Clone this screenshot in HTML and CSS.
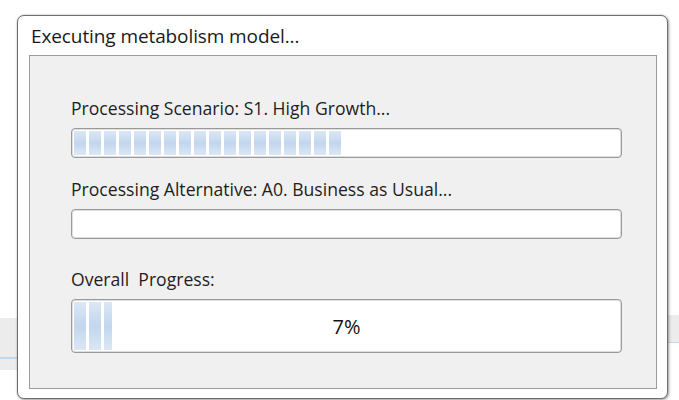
FILE: index.html
```html
<!DOCTYPE html>
<html lang="en">
<head>
<meta charset="utf-8">
<title>Executing metabolism model...</title>
<link rel="stylesheet" href="styles.css">
</head>
<body>
  <div class="dialog">
    <div class="dialog-title">Executing metabolism model...</div>
    <div class="panel">
      <div class="task">
        <div class="task-label">Processing Scenario: S1. High Growth...</div>
        <div class="bar">
          <div class="bar-fill" style="width: 49%"></div>
        </div>
      </div>
      <div class="task">
        <div class="task-label">Processing Alternative: A0. Business as Usual...</div>
        <div class="bar">
          <div class="bar-fill" style="width: 0%"></div>
        </div>
      </div>
      <div class="task task-overall">
        <div class="task-label">Overall&nbsp; Progress:</div>
        <div class="bar bar-large">
          <div class="bar-fill" style="width: 7%"></div>
          <span class="bar-text">7%</span>
        </div>
      </div>
    </div>
  </div>
</body>
</html>
```

FILE: styles.css
```css
html, body {
  margin: 0;
  padding: 0;
}

body {
  width: 679px;
  height: 400px;
  overflow: hidden;
  font-family: "Open Sans", "Noto Sans", sans-serif;
  color: #1e1e1e;
  /* desktop strips peeking out behind the window */
  background:
    linear-gradient(#c3d8ee, #c3d8ee) 0 357px / 20px 2px no-repeat,
    linear-gradient(#ececec, #ececec) 0 318px / 20px 52px no-repeat,
    linear-gradient(#c3d8ee, #c3d8ee) 660px 342px / 19px 1px no-repeat,
    linear-gradient(#ececec, #ececec) 660px 315px / 19px 27px no-repeat,
    #ffffff;
  padding: 15px 0 0 17px;
  box-sizing: border-box;
}

.dialog {
  width: 651px;
  height: 384px;
  box-sizing: border-box;
  background: #ffffff;
  border: 1px solid #6f6f6f;
  border-radius: 7px;
  box-shadow: 1px 1px 3px rgba(0, 0, 0, 0.35), 0 0 2px rgba(0, 0, 0, 0.2);
  padding: 0 10px 9px 11px;
  display: flex;
  flex-direction: column;
}

.dialog-title {
  height: 39px;
  display: flex;
  align-items: center;
  padding-left: 2px;
  font-size: 19px;
  letter-spacing: -0.1px;
  color: #1a1a1a;
}

.panel {
  flex: 1;
  background: #f0f0f0;
  border: 1px solid #9c9c9c;
  padding: 40px 34px 0 41px;
  display: flex;
  flex-direction: column;
}

.task {
  display: flex;
  flex-direction: column;
  gap: 8px;
}

.task + .task {
  margin-top: 19px;
}

.task + .task-overall {
  margin-top: 28px;
}

.task-label {
  font-size: 17.6px;
  line-height: 24px;
  color: #1e1e1e;
}

.bar {
  position: relative;
  height: 30px;
  box-sizing: border-box;
  background: #ffffff;
  border: 1px solid #9a9a9a;
  border-radius: 4px;
  box-shadow: inset 0 0 0 1px #dedede;
  padding: 2px;
  overflow: hidden;
}

.bar-large {
  height: 54px;
}

.bar-fill {
  height: 100%;
  background:
    repeating-linear-gradient(90deg, transparent 0 12px, #ffffff 12px 15px),
    linear-gradient(#dbe7f5 0%, #c2d6ee 50%, #dbe7f5 100%);
}

.bar-text {
  position: absolute;
  inset: 0;
  display: flex;
  align-items: center;
  justify-content: center;
  font-size: 20px;
  color: #111;
}
```
